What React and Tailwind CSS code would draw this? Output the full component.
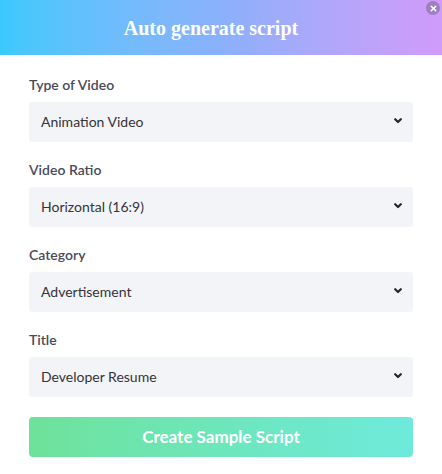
import { X } from 'lucide-react';

const fields = [
  { label: 'Type of Video', value: 'Animation Video' },
  { label: 'Video Ratio', value: 'Horizontal (16:9)' },
  { label: 'Category', value: 'Advertisement' },
  { label: 'Title', value: 'Developer Resume' },
];

function Chevron() {
  return (
    <svg width="8" height="6" viewBox="0 0 8 6" fill="none">
      <path d="M1.2 1.2L4 4L6.8 1.2" stroke="#26262e" strokeWidth="2.2" strokeLinecap="round" strokeLinejoin="round" />
    </svg>
  );
}

export default function App() {
  return (
    <div className="w-[442px] h-[474px] bg-white relative overflow-hidden" style={{ fontFamily: 'Lato, "Open Sans", sans-serif' }}>
      {/* header */}
      <div className="h-[55px] bg-gradient-to-r from-[#3ac9fd] via-[#8ab0fb] to-[#d19bfa] flex items-center justify-center pr-5">
        <h1 className="text-white text-[20px] font-bold font-['Liberation_Serif',serif] leading-none">Auto generate script</h1>
      </div>
      <button className="absolute top-[1px] right-[2px] w-[14px] h-[14px] rounded-full bg-[#9c80c2] flex items-center justify-center">
        <X size={9} strokeWidth={4} color="#fff" />
      </button>

      {/* form */}
      <div className="px-[29px] pt-[20px] flex flex-col">
        {fields.map((f, i) => (
          <div key={i} className="flex flex-col mb-[18px]">
            <label className="text-[14px] leading-5 font-semibold text-[#4a4a5c] mb-[7px]">{f.label}</label>
            <div className="h-10 rounded-[3px] bg-[#f3f4f7] flex items-center justify-between pl-3 pr-[11px] pb-[2px]">
              <span className="text-[14px] text-[#333338]">{f.value}</span>
              <Chevron />
            </div>
          </div>
        ))}
        <button className="mt-[2px] h-10 w-full rounded-[4px] bg-gradient-to-r from-[#6ee29a] to-[#6eeadb] text-white text-[17px] font-bold pb-[1px]">
          Create Sample Script
        </button>
      </div>
    </div>
  );
}
